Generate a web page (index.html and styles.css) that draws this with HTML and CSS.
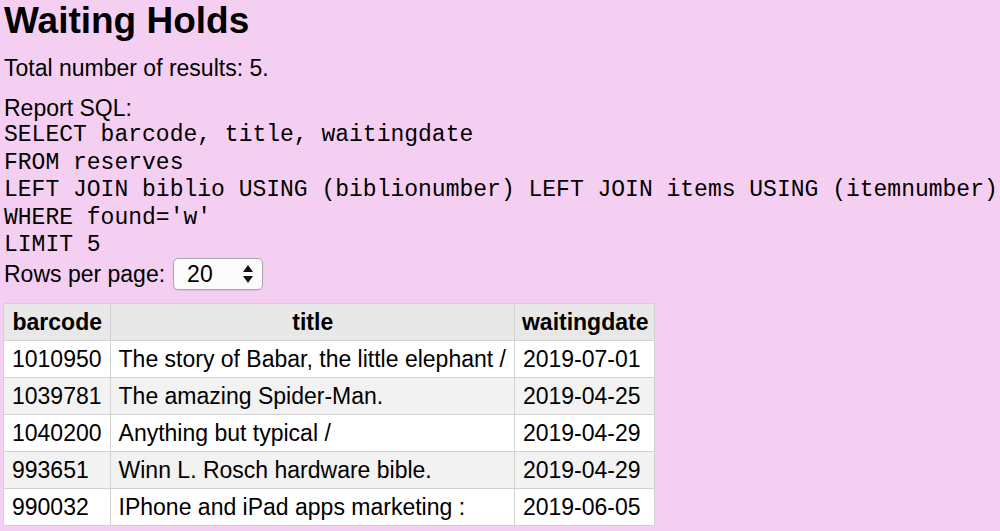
FILE: index.html
```html
<!DOCTYPE html>
<html>
<head>
<meta charset="utf-8">
<title>Waiting Holds</title>
<link rel="stylesheet" href="styles.css">
</head>
<body>
<main class="page">
  <h1 class="title">Waiting Holds</h1>
  <p class="total">Total number of results: 5.</p>
  <p class="label">Report SQL:</p>
  <pre class="sql">SELECT barcode, title, waitingdate
FROM reserves
LEFT JOIN biblio USING (biblionumber) LEFT JOIN items USING (itemnumber)
WHERE found='w'
LIMIT 5</pre>
  <div class="rows">
    <label for="rpp">Rows per page:</label>
    <span class="select-wrap">
      <select id="rpp" class="select">
        <option>10</option>
        <option selected>20</option>
        <option>50</option>
        <option>100</option>
      </select>
      <svg class="arrows" width="12" height="20" viewBox="0 0 12 20" aria-hidden="true">
        <path d="M6 1 L11 8 L1 8 Z" fill="#111"/>
        <path d="M6 19 L11 12 L1 12 Z" fill="#111"/>
      </svg>
    </span>
  </div>
  <table class="results">
    <thead>
      <tr><th>barcode</th><th>title</th><th>waitingdate</th></tr>
    </thead>
    <tbody>
      <tr><td>1010950</td><td>The story of Babar, the little elephant /</td><td>2019-07-01</td></tr>
      <tr><td>1039781</td><td>The amazing Spider-Man.</td><td>2019-04-25</td></tr>
      <tr><td>1040200</td><td>Anything but typical /</td><td>2019-04-29</td></tr>
      <tr><td>993651</td><td>Winn L. Rosch hardware bible.</td><td>2019-04-29</td></tr>
      <tr><td>990032</td><td>IPhone and iPad apps marketing :</td><td>2019-06-05</td></tr>
    </tbody>
  </table>
</main>
</body>
</html>
```

FILE: styles.css
```css
html, body {
  margin: 0;
  padding: 0;
  background: #f5cff1;
}
body {
  font-family: "Liberation Sans", Arial, sans-serif;
  font-size: 23px;
  color: #000;
}
.page {
  padding: 0 3px 0 4px;
}
.title {
  margin: 0;
  font-size: 37px;
  line-height: 42px;
  font-weight: bold;
}
.total {
  margin: 12px 0 0 0;
  line-height: 28px;
}
.label {
  margin: 12px 0 0 0;
  line-height: 28px;
}
.sql {
  margin: 0;
  font-family: "Liberation Mono", "Courier New", monospace;
  font-size: 23px;
  line-height: 27.5px;
  white-space: pre;
}
.rows {
  display: flex;
  align-items: center;
  gap: 8px;
  margin-top: -3px;
  height: 35px;
}
.select-wrap {
  position: relative;
  display: inline-block;
  height: 32px;
}
.select {
  -webkit-appearance: none;
  appearance: none;
  width: 90px;
  height: 32px;
  border: 1px solid #a8a8a8;
  border-radius: 5px;
  background: #fbfbfb;
  font-family: "Liberation Sans", Arial, sans-serif;
  font-size: 23px;
  padding: 0 0 0 13px;
  color: #000;
  box-shadow: 0 1px 1px rgba(0,0,0,0.08);
}
.arrows {
  position: absolute;
  right: 9px;
  top: 6px;
  pointer-events: none;
}
.results {
  border-collapse: collapse;
  margin: 11px 0 0 -1px;
  background: #fff;
}
.results th,
.results td {
  border: 1px solid #d2d2d2;
  padding: 0 8px 0 8px;
  height: 36px;
  line-height: 26px;
  text-align: left;
  white-space: nowrap;
}
.results th {
  background: #e8e8e8;
  font-weight: bold;
  text-align: center;
  padding: 0 6px 0 7px;
}
.results tbody tr:nth-child(odd) td {
  background: #ffffff;
}
.results tbody tr:nth-child(even) td {
  background: #f2f2f2;
}
```
